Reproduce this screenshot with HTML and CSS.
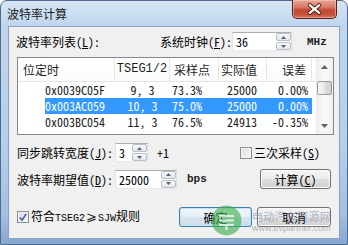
FILE: index.html
```html
<!DOCTYPE html>
<html lang="zh-CN">
<head>
<meta charset="utf-8">
<title>波特率计算</title>
<link rel="stylesheet" href="styles.css">
</head>
<body>
<div class="win">
  <div class="titlebar">
    <span class="title">波特率计算</span>
    <div class="close">
      <svg width="45" height="18" viewBox="0 0 45 18">
        <path d="M17.5 5 L27.5 13 M27.5 5 L17.5 13" stroke="#4a1710" stroke-width="4.2" stroke-linecap="round"/>
        <path d="M17.5 5 L27.5 13 M27.5 5 L17.5 13" stroke="#ffffff" stroke-width="2.4" stroke-linecap="round"/>
      </svg>
    </div>
  </div>
  <div class="client">
    <div class="row r1">
      <span class="lbl w-list">波特率列表(<u>L</u>):</span>
      <span class="lbl w-clk">系统时钟(<u>F</u>):</span>
      <div class="field f-clk">
        <span class="val">36</span>
        <div class="ud">
          <span class="udb"><svg width="5" height="3" viewBox="0 0 5 3"><polygon points="0,3 2.5,0 5,3" fill="#4f6281"/></svg></span>
          <span class="udb"><svg width="5" height="3" viewBox="0 0 5 3"><polygon points="0,0 2.5,3 5,0" fill="#4f6281"/></svg></span>
        </div>
      </div>
      <span class="unit">MHz</span>
    </div>

    <div class="list">
      <div class="lv">
        <div class="hdr">
          <span class="hc c1">位定时</span>
          <span class="hc c2 mono">TSEG1/2</span>
          <span class="hc c3">采样点</span>
          <span class="hc c4">实际值</span>
          <span class="hc c5">误差</span>
          <span class="hc c6"></span>
        </div>
        <div class="item">
          <span class="ic i0"></span>
          <span class="ic i1">0x0039C05F</span>
          <span class="ic i2">9, 3</span>
          <span class="ic i3">73.3%</span>
          <span class="ic i4">25000</span>
          <span class="ic i5">0.00%</span>
        </div>
        <div class="item sel">
          <span class="ic i0"></span>
          <span class="ic i1">0x003AC059</span>
          <span class="ic i2">10, 3</span>
          <span class="ic i3">75.0%</span>
          <span class="ic i4">25000</span>
          <span class="ic i5">0.00%</span>
        </div>
        <div class="item">
          <span class="ic i0"></span>
          <span class="ic i1">0x003BC054</span>
          <span class="ic i2">11, 3</span>
          <span class="ic i3">76.5%</span>
          <span class="ic i4">24913</span>
          <span class="ic i5">-0.35%</span>
        </div>
      </div>
      <div class="sb">
        <span class="sb-btn"><svg width="7" height="4" viewBox="0 0 7 4"><polygon points="0,4 3.5,0 7,4" fill="#606060"/></svg></span>
        <span class="thumb"></span>
        <span class="sb-btn sb-dn"><svg width="7" height="4" viewBox="0 0 7 4"><polygon points="0,0 3.5,4 7,0" fill="#606060"/></svg></span>
      </div>
    </div>

    <div class="row r3">
      <span class="lbl w-l2">同步跳转宽度(<u>J</u>):</span>
      <div class="field f-sjw">
        <span class="val">3</span>
        <div class="ud">
          <span class="udb"><svg width="5" height="3" viewBox="0 0 5 3"><polygon points="0,3 2.5,0 5,3" fill="#4f6281"/></svg></span>
          <span class="udb"><svg width="5" height="3" viewBox="0 0 5 3"><polygon points="0,0 2.5,3 5,0" fill="#4f6281"/></svg></span>
        </div>
      </div>
      <span class="plus">+1</span>
      <span class="chk"><span class="box"></span><span class="ct">三次采样(<u>S</u>)</span></span>
    </div>

    <div class="row r4">
      <span class="lbl w-l2">波特率期望值(<u>D</u>):</span>
      <div class="field f-bps">
        <span class="val">25000</span>
        <div class="ud">
          <span class="udb"><svg width="5" height="3" viewBox="0 0 5 3"><polygon points="0,3 2.5,0 5,3" fill="#4f6281"/></svg></span>
          <span class="udb"><svg width="5" height="3" viewBox="0 0 5 3"><polygon points="0,0 2.5,3 5,0" fill="#4f6281"/></svg></span>
        </div>
      </div>
      <span class="unit u-bps">bps</span>
      <span class="btn b-calc">计算(<u>C</u>)</span>
    </div>

    <div class="row r5">
      <span class="chk c-rule">
        <span class="box on"><svg width="11" height="11" viewBox="0 0 11 11"><path d="M2 5.5 L4.5 8.5 L9 1.5" fill="none" stroke="#4b5c9c" stroke-width="1.8"/></svg></span>
        <span class="ct">符合<span class="mono m2">TSEG2</span><span class="ge">⩾</span><span class="mono m2">SJW</span>规则</span>
      </span>
      <span class="btn def b-ok">确定</span>
      <span class="btn b-cancel">取消</span>
    </div>

    <div class="wm">
      <svg class="wm-logo" width="31" height="31" viewBox="0 0 31 31">
        <circle cx="15.5" cy="15.5" r="15" fill="#3fae4a" opacity="0.62"/>
        <rect x="8" y="10" width="15" height="2.2" fill="#ffffff" opacity="0.7"/>
        <rect x="8" y="14.4" width="15" height="2.2" fill="#ffffff" opacity="0.7"/>
        <rect x="8" y="18.8" width="15" height="2.2" fill="#ffffff" opacity="0.7"/>
        <rect x="14.4" y="21" width="2.2" height="4" fill="#ffffff" opacity="0.7"/>
      </svg>
      <div class="wm-text">
        <span class="wm-cn">电动汽车资源网</span>
        <span class="wm-en">www.evpartner.com</span>
      </div>
    </div>
  </div>
</div>
</body>
</html>
```

FILE: styles.css
```css
* { box-sizing: border-box; }
html, body { margin: 0; padding: 0; }
body {
  width: 348px;
  height: 245px;
  overflow: hidden;
  background: #ffffff;
  font-family: "Noto Sans CJK SC", "Noto Sans", sans-serif;
  font-size: 12px;
  color: #000;
  font-feature-settings: "hwid" 1;
}
u { text-decoration: underline; text-underline-offset: 1px; }

.win {
  width: 348px;
  height: 245px;
  display: flex;
  flex-direction: column;
  border: 1px solid #4f6b8f;
  border-radius: 7px 7px 0 0;
  background: linear-gradient(180deg, #d6e5f5 0px, #c0d6ee 24px, #b6cee9 60%, #a3bfe1 88%, #86a7d1 100%);
}

.titlebar {
  height: 25px;
  display: flex;
  justify-content: space-between;
  align-items: flex-start;
  padding-left: 6px;
  padding-right: 10px;
}
.title {
  margin-top: 7px;
  line-height: 12px;
  font-size: 12px;
  color: #1b1b1b;
}
.close {
  width: 45px;
  height: 19px;
  margin-top: -1px;
  border: 1px solid #5b2018;
  border-top: none;
  border-radius: 0 0 5px 5px;
  background: linear-gradient(180deg, #e7a597 0%, #d77a68 40%, #c24a33 55%, #c4513a 80%, #d9775c 100%);
  box-shadow: inset 0 0 0 1px rgba(255, 220, 210, 0.45);
  display: flex;
}

.client {
  margin: 0 7px;
  width: 332px;
  height: 213px;
  background: #f0f0f0;
  border: 1px solid #8aa2c0;
  position: relative;
  display: flex;
  flex-direction: column;
}

.row { display: flex; align-items: center; }
.lbl { white-space: nowrap; line-height: 19px; }

.r1 { height: 19px; margin-top: 5px; padding-left: 7px; }
.w-list { width: 144px; }
.w-clk { width: 72px; }

.field {
  height: 19px;
  display: flex;
  align-items: stretch;
  background: #fff;
  border: 1px solid #abadb3;
  border-left-color: #e2e3ea;
  border-right-color: #dbdfe6;
  border-bottom-color: #e3e9ef;
}
.val { flex: 1; padding-left: 3px; line-height: 17px; }
.f-clk { width: 60px; }
.f-sjw { width: 33px; }
.f-bps { width: 62px; }
.ud {
  width: 15px;
  display: flex;
  flex-direction: column;
  gap: 1px;
  padding: 0;
}
.udb {
  flex: 1;
  display: flex;
  align-items: center;
  justify-content: center;
  border: 1px solid #b9bec6;
  border-radius: 2px;
  background: linear-gradient(180deg, #f7f8f9, #e3e6ea);
}

.unit {
  font-family: "Liberation Mono", monospace;
  font-weight: bold;
  font-size: 11px;
  color: #222;
}
.r1 .unit { margin-left: 15px; }

.list {
  margin-top: 6px;
  margin-left: 8px;
  width: 317px;
  height: 78px;
  background: #fff;
  border: 1px solid #828790;
  display: flex;
}
.lv { width: 298px; display: flex; flex-direction: column; }
.hdr {
  height: 24px;
  display: flex;
  border-bottom: 1px solid #e5e5e5;
  background: linear-gradient(180deg, #ffffff, #fbfbfb);
}
.hc {
  line-height: 23px;
  border-right: 1px solid #e5e5e5;
  white-space: nowrap;
  color: #1e1e1e;
}
.c1 { width: 97px; padding-left: 5px; }
.c2 { width: 55px; text-align: center; }
.c3 { width: 49px; padding-left: 4px; }
.c4 { width: 48px; text-align: right; padding-right: 9px; }
.c5 { width: 45px; text-align: right; padding-right: 5px; }
.c6 { flex: 1; border-right: none; }
.mono { font-family: "Liberation Mono", monospace; font-size: 12px; }

.item { height: 16px; display: flex; line-height: 16px; color: #1a1a1a; }
.ic { white-space: nowrap; }
.i0 { width: 27px; }
.i1 { width: 70px; }
.i2 { width: 55px; text-align: center; }
.i3 { width: 49px; padding-left: 2px; }
.i4 { width: 48px; text-align: right; padding-right: 10px; }
.i5 { width: 45px; text-align: right; padding-right: 4px; }
.item.sel .ic:not(.i0) { background: #3399ff; color: #fff; }

.sb {
  width: 17px;
  display: flex;
  flex-direction: column;
  background: linear-gradient(90deg, #ececec, #f7f7f7 40%, #f7f7f7 70%, #eeeeee);
}
.sb-btn { height: 17px; display: flex; align-items: center; justify-content: center; }
.sb-dn { margin-top: auto; }
.thumb {
  margin: 6px 1px 0 1px;
  height: 14px;
  border: 1px solid #9a9a9a;
  border-radius: 2px;
  background: linear-gradient(90deg, #f6f6f6, #e8e8e8 50%, #dadada 51%, #d4d4d4);
}

.r3 { height: 19px; margin-top: 8px; padding-left: 8px; }
.w-l2 { width: 98px; }
.plus { margin-left: 9px; width: 83px; }
.chk { display: flex; align-items: center; }
.box {
  width: 12px;
  height: 12px;
  border: 1px solid #8f8f8f;
  background: linear-gradient(135deg, #d9dadc, #f5f5f6 80%);
  box-shadow: inset 0 0 0 1px #f2f2f2;
  display: flex;
  align-items: center;
  justify-content: center;
}
.box.on { background: linear-gradient(135deg, #d4d7ec, #f6f6fb 80%); }
.ct { margin-left: 2px; line-height: 16px; white-space: nowrap; }

.r4 { height: 20px; margin-top: 7px; padding-left: 8px; }
.u-bps { margin-left: 10px; width: 73px; }
.btn {
  height: 20px;
  display: flex;
  align-items: center;
  justify-content: center;
  border: 1px solid #707070;
  border-radius: 3px;
  background: linear-gradient(180deg, #f4f4f4 0%, #ebebeb 50%, #dedede 51%, #d1d1d1 100%);
  box-shadow: inset 0 0 0 1px #fbfbfb;
  white-space: nowrap;
}
.b-calc { width: 71px; }

.r5 { height: 20px; margin-top: 18px; padding-left: 8px; }
.c-rule { width: 162px; }
.m2 { font-size: 10px; }
.ge { font-size: 13px; margin: 0 1px; color: #222; }
.def {
  border-color: #3c7fb1;
  background: linear-gradient(180deg, #f1f6fa 0%, #e6eef5 50%, #d7e4ef 51%, #cbdceb 100%);
  box-shadow: inset 0 0 0 1px #c4e3f7;
}
.b-ok { width: 73px; }
.b-cancel { width: 74px; margin-left: 5px; }

.wm {
  position: absolute;
  left: 202px;
  top: 178px;
  display: flex;
  align-items: center;
  pointer-events: none;
}
.wm-text {
  display: flex;
  flex-direction: column;
  margin-left: 10px;
  margin-top: 2px;
}
.wm-cn { font-size: 11px; line-height: 13px; color: rgba(120, 140, 170, 0.6); letter-spacing: 0.3px; }
.wm-en { font-family: "Liberation Sans", sans-serif; font-size: 9px; line-height: 10px; color: rgba(140, 140, 140, 0.65); }
```
